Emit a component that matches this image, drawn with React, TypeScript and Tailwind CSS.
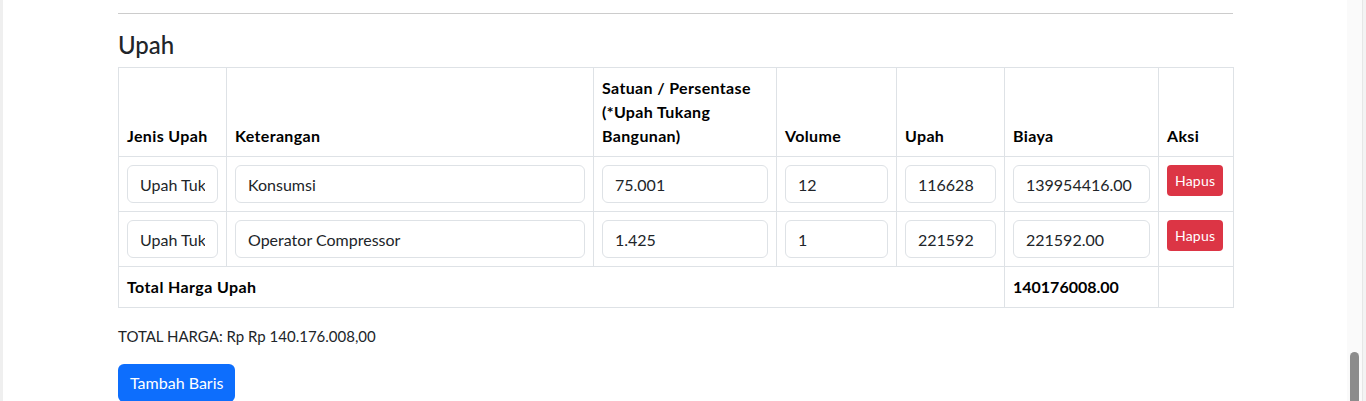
import React from "react";

const font = { fontFamily: 'Lato, "Noto Sans", sans-serif' };

const rows = [
  { jenis: "Upah Tukang Bangunan", ket: "Konsumsi", sat: "75.001", vol: "12", upah: "116628", biaya: "139954416.00" },
  { jenis: "Upah Tukang Bangunan", ket: "Operator Compressor", sat: "1.425", vol: "1", upah: "221592", biaya: "221592.00" },
];

function Field({ value }: { value: string }) {
  return (
    <input
      readOnly
      value={value}
      className="block w-full h-[38px] px-3 border border-[#dee2e6] rounded-[6px] text-[16px] text-[#212529] bg-white outline-none"
      style={font}
    />
  );
}

export default function App() {
  const th = "border border-[#dee2e6] p-2 text-left align-bottom font-bold text-black leading-6 tracking-[0.35px]";
  const td = "border border-[#dee2e6] p-2 align-top";
  return (
    <div className="flex w-[1366px] h-[401px] overflow-hidden bg-white text-[16px] text-[#212529]" style={font}>
      <div className="w-[3px] shrink-0 bg-[#efefef]" />
      <div className="flex-1 pl-[115px]">
        <div className="w-[1116px]">
          <div className="mt-[13px] w-[1115px] border-t border-[#cccccc]" />
          <h4 className="mt-4 mb-2 text-[24px] leading-[29px] font-medium text-[#212529]">Upah</h4>
          <table className="w-[1115px] table-fixed border-collapse text-black">
            <colgroup>
              <col className="w-[108px]" />
              <col className="w-[367px]" />
              <col className="w-[183px]" />
              <col className="w-[120px]" />
              <col className="w-[108px]" />
              <col className="w-[154px]" />
              <col className="w-[75px]" />
            </colgroup>
            <thead>
              <tr>
                <th className={th}>Jenis Upah</th>
                <th className={th}>Keterangan</th>
                <th className={th}>Satuan / Persentase (*Upah Tukang Bangunan)</th>
                <th className={th}>Volume</th>
                <th className={th}>Upah</th>
                <th className={th}>Biaya</th>
                <th className={th}>Aksi</th>
              </tr>
            </thead>
            <tbody>
              {rows.map((r, i) => (
                <tr key={i}>
                  <td className={td}><Field value={r.jenis} /></td>
                  <td className={td}><Field value={r.ket} /></td>
                  <td className={td}><Field value={r.sat} /></td>
                  <td className={td}><Field value={r.vol} /></td>
                  <td className={td}><Field value={r.upah} /></td>
                  <td className={td}><Field value={r.biaya} /></td>
                  <td className={td}>
                    <button className="h-[31px] px-2 rounded-[4px] bg-[#dc3545] text-white text-[14px] leading-[21px] tracking-[0.2px]" style={font}>
                      Hapus
                    </button>
                  </td>
                </tr>
              ))}
              <tr>
                <td colSpan={5} className="border border-[#dee2e6] p-2 font-bold leading-6 tracking-[0.4px]">Total Harga Upah</td>
                <td className="border border-[#dee2e6] p-2 font-bold leading-6">140176008.00</td>
                <td className="border border-[#dee2e6] p-2 leading-6"></td>
              </tr>
            </tbody>
          </table>
          <p className="mt-4 mb-4 text-[15px] leading-6">TOTAL HARGA: Rp Rp 140.176.008,00</p>
          <button className="h-[38px] px-3 rounded-[6px] bg-[#0d6efd] text-white text-[16px] leading-6" style={font}>
            Tambah Baris
          </button>
        </div>
      </div>
      <div className="w-[15px] shrink-0 bg-[#fafafa] flex flex-col justify-end items-center">
        <div className="w-[9px] h-[49px] rounded-t-full bg-[#8c8c8c]" />
      </div>
      <div className="w-[4px] shrink-0 bg-[#f3f3f3] border-l border-[#e6e6e6]" />
    </div>
  );
}
